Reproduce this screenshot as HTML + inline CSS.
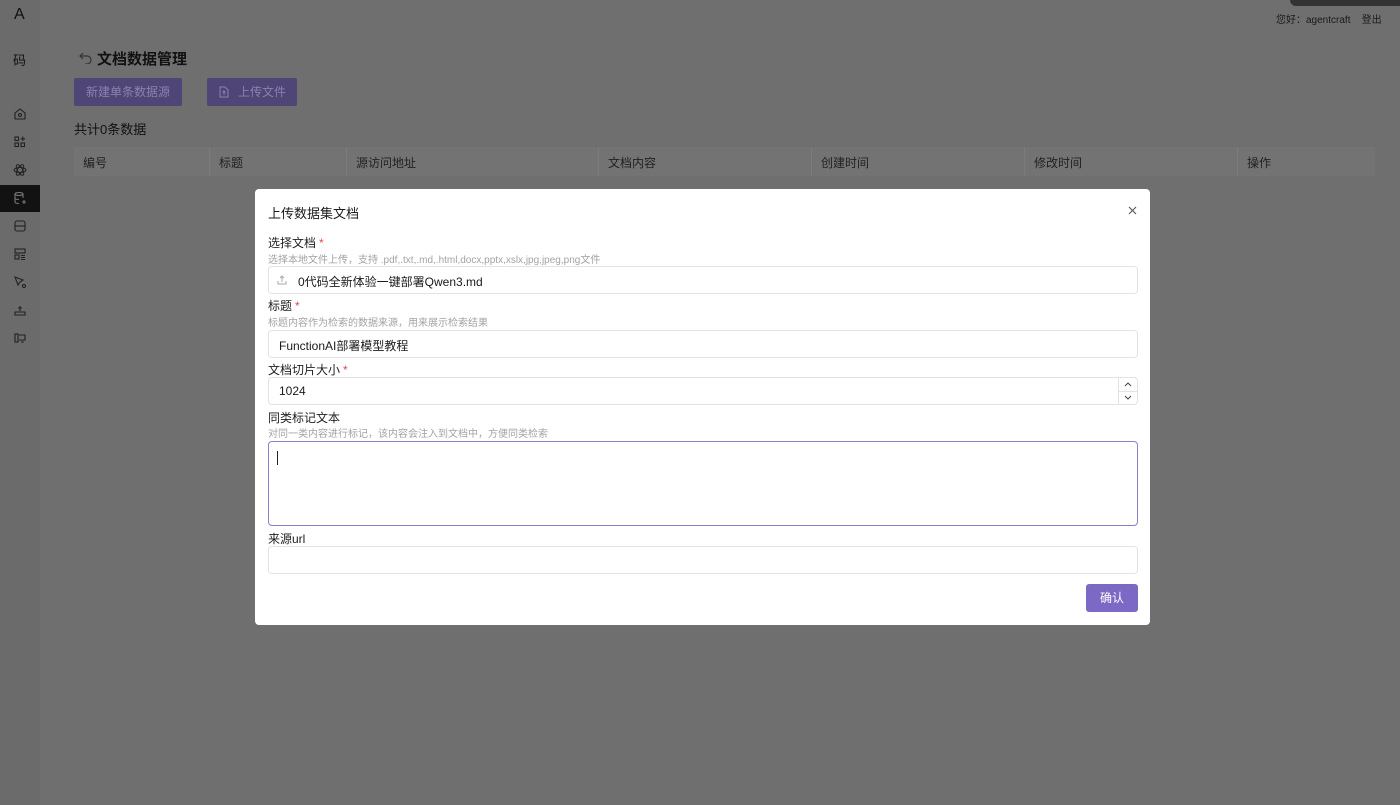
<!DOCTYPE html>
<html><head><meta charset="utf-8"><style>
*{box-sizing:border-box;margin:0;padding:0}
body{width:1400px;height:805px;overflow:hidden;background:#6f6f6f;font-family:"Liberation Sans","Noto Sans CJK SC",sans-serif;position:relative;color:#1a1a1a}
.abs{position:absolute}
.side{left:0;top:0;width:40px;height:805px;background:#6b6b6b}
.ic{position:absolute;left:13px;width:14px;height:14px}
.th{position:absolute;top:147px;height:29px;background:#737373;border-right:1px solid #7c7c7c;font-size:12px;color:#222;padding:7px 9px}
.dlg{left:255px;top:189px;width:895px;height:436px;background:#fff;border-radius:4px}
.lbl{position:absolute;left:13px;font-size:12px;color:#1f1f1f}
.lbl b{color:#e5484d;font-weight:normal;margin-left:3px}
.help{position:absolute;left:13px;font-size:10px;color:#a3a3a3}
.inp{position:absolute;left:13px;width:870px;height:28px;border:1px solid #e3e3e3;border-radius:4px;font-size:12px;color:#1a1a1a;padding:6px 10px}
</style></head><body>
<div class="abs side"></div>
<div class="abs" style="left:14px;top:6px;font-size:16px;color:#111">A</div>
<div class="abs" style="left:13px;top:50px;font-size:13px;color:#111">码</div>
<div class="abs" style="left:0;top:185px;width:40px;height:27px;background:#121212"></div>
<svg class="ic" style="top:107px" viewBox="0 0 14 14" fill="none" stroke="#222" stroke-width="1.1"><path d="M2 6L7 2l5 4v6H2z"/><circle cx="7" cy="8" r="1.5"/></svg>
<svg class="ic" style="top:135px" viewBox="0 0 14 14" fill="none" stroke="#222" stroke-width="1.1"><rect x="2" y="2" width="3.5" height="3.5"/><rect x="2" y="8" width="3.5" height="3.5"/><rect x="8" y="8" width="3.5" height="3.5"/><path d="M9.8 1.5v4.5M7.5 3.8h4.5"/></svg>
<svg class="ic" style="top:163px" viewBox="0 0 14 14" fill="none" stroke="#222" stroke-width="1"><ellipse cx="7" cy="7" rx="6" ry="2.5"/><ellipse cx="7" cy="7" rx="6" ry="2.5" transform="rotate(60 7 7)"/><ellipse cx="7" cy="7" rx="6" ry="2.5" transform="rotate(-60 7 7)"/></svg>
<svg class="ic" style="top:191px" viewBox="0 0 14 14" fill="none" stroke="#777" stroke-width="1.1"><ellipse cx="6" cy="3" rx="4" ry="1.5"/><path d="M2 3v8c0 1 2 1.5 4 1.5M10 3v4M2 7c0 1 2 1.5 4 1.5"/><path d="M11 9v4M9 11h4"/></svg>
<svg class="ic" style="top:219px" viewBox="0 0 14 14" fill="none" stroke="#222" stroke-width="1.1"><rect x="2" y="2" width="10" height="10" rx="2"/><path d="M2 7h10"/></svg>
<svg class="ic" style="top:247px" viewBox="0 0 14 14" fill="none" stroke="#222" stroke-width="1.1"><rect x="2" y="2" width="10" height="4"/><rect x="2" y="8" width="4" height="4"/><path d="M8 8.5h4M8 10.5h4M8 12.5h4"/></svg>
<svg class="ic" style="top:275px" viewBox="0 0 14 14" fill="none" stroke="#222" stroke-width="1.1"><path d="M2 2l8 3-3 2-2 3z"/><circle cx="11" cy="11" r="1.5"/></svg>
<svg class="ic" style="top:303px" viewBox="0 0 14 14" fill="none" stroke="#222" stroke-width="1.1"><path d="M7 3v5M5 5h4M2 9h10v3H2z"/></svg>
<svg class="ic" style="top:331px" viewBox="0 0 14 14" fill="none" stroke="#222" stroke-width="1.1"><rect x="2" y="3" width="3" height="8"/><path d="M6 4h6v5H6M8 11h3"/></svg>

<div class="abs" style="left:1290px;top:-6px;width:120px;height:12px;background:#333;border-radius:6px"></div>
<div class="abs" style="left:1276px;top:11px;font-size:10px;color:#1a1a1a">您好：agentcraft&nbsp;&nbsp;&nbsp;&nbsp;登出</div>

<svg class="abs" style="left:78px;top:51px" width="15" height="13" viewBox="0 0 15 13" fill="none" stroke="#333" stroke-width="1.2"><path d="M5 2L2 5l3 3M2 5h7a4 4 0 010 8H7"/></svg>
<div class="abs" style="left:97px;top:48px;font-size:15px;font-weight:bold;color:#111">文档数据管理</div>
<div class="abs" style="left:74px;top:78px;width:108px;height:28px;background:#4f4577;border-radius:2px;font-size:12px;color:#8a82ad;text-align:center;line-height:28px">新建单条数据源</div>
<div class="abs" style="left:207px;top:78px;width:90px;height:28px;background:#4f4577;border-radius:2px;font-size:12px;color:#8a82ad;line-height:28px;padding-left:31px">上传文件</div>
<svg class="abs" style="left:219px;top:86px" width="10" height="12" viewBox="0 0 10 12" fill="none" stroke="#8a82ad"><path d="M1 1h5l3 3v7H1z M5 9V5M3.5 6.5L5 5l1.5 1.5"/></svg>
<div class="abs" style="left:74px;top:119px;font-size:13px;color:#111">共计0条数据</div>
<div class="abs" style="left:74px;top:147px;width:1301px;height:29px;border:1px solid #7a7a7a;background:#737373"></div>
<div class="th" style="left:74px;width:136px">编号</div>
<div class="th" style="left:210px;width:137px">标题</div>
<div class="th" style="left:347px;width:252px">源访问地址</div>
<div class="th" style="left:599px;width:213px">文档内容</div>
<div class="th" style="left:812px;width:213px">创建时间</div>
<div class="th" style="left:1025px;width:213px">修改时间</div>
<div class="th" style="left:1238px;width:137px;border-right:none">操作</div>

<div class="abs dlg">
 <div class="abs" style="left:13px;top:14px;font-size:13px;color:#1a1a1a">上传数据集文档</div>
 <svg class="abs" style="left:873px;top:17px" width="9" height="9" viewBox="0 0 9 9" stroke="#555" stroke-width="1.1"><path d="M1 1l7 7M8 1L1 8"/></svg>
 <div class="lbl" style="top:45px">选择文档<b>*</b></div>
 <div class="help" style="top:62px">选择本地文件上传，支持 .pdf,.txt,.md,.html,docx,pptx,xslx,jpg,jpeg,png文件</div>
 <div class="inp" style="top:77px;padding-left:29px">0代码全新体验一键部署Qwen3.md</div>
 <svg class="abs" style="left:22px;top:86px" width="10" height="10" viewBox="0 0 10 10" fill="none" stroke="#aaa"><path d="M5 7V1M3 3l2-2 2 2M1 6v3h8V6"/></svg>
 <div class="lbl" style="top:108px">标题<b>*</b></div>
 <div class="help" style="top:125px">标题内容作为检索的数据来源，用来展示检索结果</div>
 <div class="inp" style="top:141px">FunctionAI部署模型教程</div>
 <div class="lbl" style="top:172px">文档切片大小<b>*</b></div>
 <div class="inp" style="top:188px">1024</div>
 <div class="abs" style="left:863px;top:188px;width:20px;height:28px;border-left:1px solid #e3e3e3"></div>
 <div class="abs" style="left:863px;top:202px;width:20px;border-top:1px solid #e3e3e3"></div>
 <svg class="abs" style="left:869px;top:192px" width="8" height="20" viewBox="0 0 8 20" fill="none" stroke="#444"><path d="M1 5l3-3 3 3M1 15l3 3 3-3"/></svg>
 <div class="lbl" style="top:220px">同类标记文本</div>
 <div class="help" style="top:236px">对同一类内容进行标记，该内容会注入到文档中，方便同类检索</div>
 <div class="inp" style="top:252px;height:85px;border-color:#8c80cc"></div>
 <div class="abs" style="left:22px;top:262px;width:1px;height:14px;background:#222"></div>
 <div class="lbl" style="top:341px">来源url</div>
 <div class="inp" style="top:357px"></div>
 <div class="abs" style="left:831px;top:395px;width:52px;height:28px;background:#7c69c6;border-radius:3px;color:#fff;font-size:12px;text-align:center;line-height:28px">确认</div>
</div>
</body></html>
